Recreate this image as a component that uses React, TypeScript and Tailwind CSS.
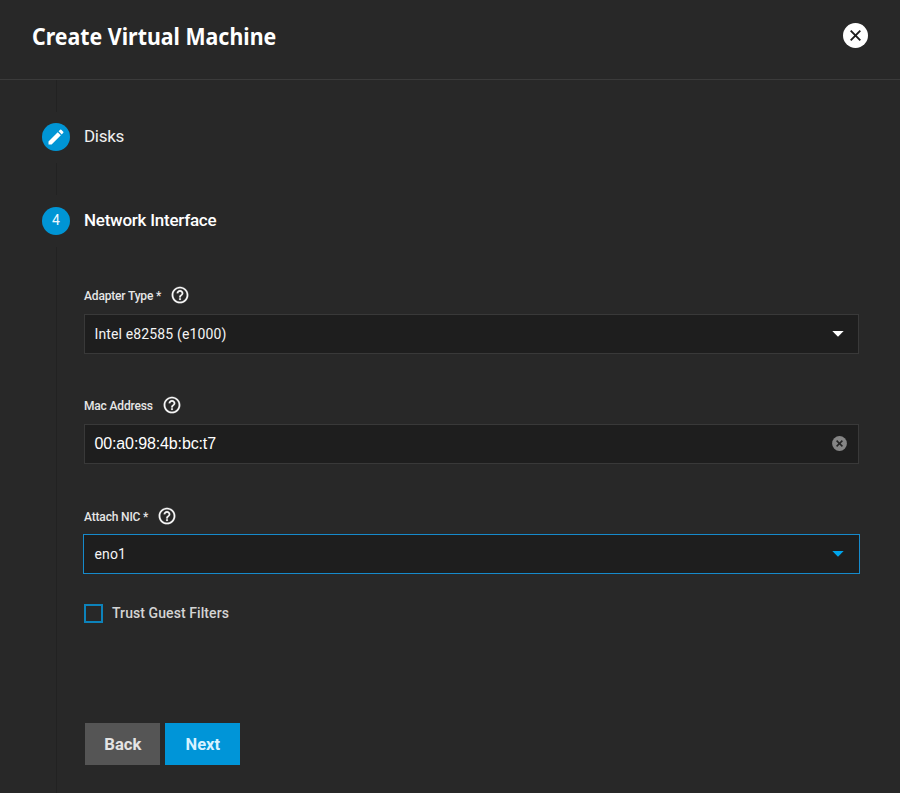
import React from "react";

function HelpIcon() {
  return (
    <svg className="size-5 shrink-0" viewBox="0 0 24 24" fill="#f7f7f7" stroke="#f7f7f7" strokeWidth="0.200">
      <path d="M11 18h2v-2h-2v2zm1-16C6.480 2 2 6.480 2 12s4.480 10 10 10 10-4.480 10-10S17.520 2 12 2zm0 18c-4.410 0-8-3.590-8-8s3.590-8 8-8 8 3.590 8 8-3.590 8-8 8zm0-14c-2.210 0-4 1.790-4 4h2c0-1.100.9-2 2-2s2 .9 2 2c0 2-3 1.750-3 5h2c0-2.250 3-2.500 3-5 0-2.210-1.790-4-4-4z" />
    </svg>
  );
}

function Label({ children, className }: { children: React.ReactNode; className: string }) {
  return (
    <div className={`flex h-5 items-center gap-[9px] text-[12px] leading-[18px] font-medium tracking-[-0.170px] text-[#e6e6e6] ${className}`}>
      <span className="pt-px whitespace-nowrap">{children}</span>
      <HelpIcon />
    </div>
  );
}

function Caret({ className }: { className: string }) {
  return (
    <svg className={`h-[6px] w-[12px] ${className}`} viewBox="0 0 12 6" fill="currentColor">
      <path d="M0.300 0h11.400L6 5.800z" />
    </svg>
  );
}

export default function App() {
  return (
    <div className="flex h-[793px] w-[900px] flex-col overflow-hidden bg-[#282828] font-['Roboto',sans-serif] text-white">
      <header className="flex h-20 shrink-0 items-center justify-between border-b border-[#3b3b3b] pr-8 pb-2 pl-[31.500px]">
        <h1 className="mt-px origin-left scale-x-[0.889] font-['Noto_Sans',sans-serif] text-[24px] leading-8 font-bold whitespace-nowrap">
          Create Virtual Machine
        </h1>
        <button aria-label="Close" className="flex size-[25px] items-center justify-center rounded-full bg-white">
          <svg className="size-[11px]" viewBox="0 0 11 11" stroke="#1c1c1c" strokeWidth="1.900" fill="none">
            <path d="M0.700 0.700l9.600 9.600M10.300 0.700L0.700 10.300" />
          </svg>
        </button>
      </header>

      <main className="flex min-h-0 flex-1 pl-[42px]">
        <aside className="flex w-7 flex-col items-center">
          <div className="h-8 w-px bg-[#222222]" />
          <div className="mt-[10.500px] flex size-7 shrink-0 items-center justify-center rounded-full bg-[#0095d5]">
            <svg className="size-5" viewBox="0 0 24 24" fill="#fff">
              <path d="M3 17.250V21h3.750L17.810 9.940l-3.750-3.750L3 17.250zM20.710 7.040a1 1 0 0 0 0-1.410l-2.340-2.340a1 1 0 0 0-1.410 0l-1.830 1.830 3.750 3.750 1.830-1.830z" />
            </svg>
          </div>
          <div className="mt-3 h-8 w-px bg-[#222222]" />
          <div className="mt-3 flex size-7 shrink-0 items-center justify-center rounded-full bg-[#0095d5] text-[14px] text-[#eef9ff]">
            4
          </div>
          <div className="mt-3 w-px flex-1 bg-[#222222]" />
        </aside>

        <section className="ml-[14px] flex w-[775px] flex-col">
          <h2 className="mt-[44px] h-6 text-[17px] leading-6 tracking-[-0.300px] text-[#f0f0f0]">
            <span>Disks</span>
          </h2>
          <h2 className="mt-[60px] h-6 text-[17px] leading-6 font-medium tracking-[-0.250px] text-white">
            <span>Network Interface</span>
          </h2>

          <Label className="mt-[53px]">Adapter Type *</Label>
          <div className="mt-[9px] flex h-[40px] items-center justify-between border border-[#393939] bg-[#1e1e1e] pr-[14px] pl-[9.500px] text-[14px] tracking-[0.140px] text-[#f4f4f4]">
            <span>Intel e82585 (e1000)</span>
            <Caret className="text-white" />
          </div>

          <Label className="mt-[41px]">Mac Address</Label>
          <div className="mt-[9px] flex h-[40px] items-center justify-between border border-[#393939] bg-[#1e1e1e] pr-[11px] pl-[9.500px]">
            <span className="-mt-px font-['Liberation_Sans',Arial,sans-serif] text-[16px] tracking-[-0.130px] text-white">
              00:a0:98:4b:bc:t7
            </span>
            <svg className="-mt-px size-[15px]" viewBox="0 0 15 15">
              <circle cx="7.500" cy="7.500" r="7.400" fill="#858585" />
              <path d="M4.600 4.600l5.800 5.800M10.400 4.600l-5.800 5.800" stroke="#252525" strokeWidth="1.500" />
            </svg>
          </div>

          <Label className="mt-[42px]">Attach NIC *</Label>
          <div className="mt-[8px] -ml-px flex h-[40px] w-[777px] items-center justify-between border border-[#168acb] bg-[#1e1e1e] pr-[15px] pl-[10.500px] text-[14px] tracking-[0.140px] text-[#f4f4f4]">
            <span>eno1</span>
            <Caret className="text-[#00a5ec]" />
          </div>

          <label className="mt-[29px] flex h-5 items-center gap-[9px] text-[14px] font-medium tracking-[0.080px] text-[#d4d4d4]">
            <span className="size-[19px] border-2 border-[#0d83bb]" />
            <span>Trust Guest Filters</span>
          </label>

          <div className="mt-[100px] ml-px flex gap-[5px] text-[16px] font-bold">
            <button className="h-[42px] w-[75px] bg-[#555555] pt-0.5 text-[#e4e4e4]">
              <span className="inline-block scale-x-[1.040]">Back</span>
            </button>
            <button className="h-[42px] w-[75px] bg-[#0095d8] pt-0.5 text-[#d8f2ff]">
              <span className="inline-block scale-x-[1.030]">Next</span>
            </button>
          </div>
        </section>
      </main>
    </div>
  );
}
